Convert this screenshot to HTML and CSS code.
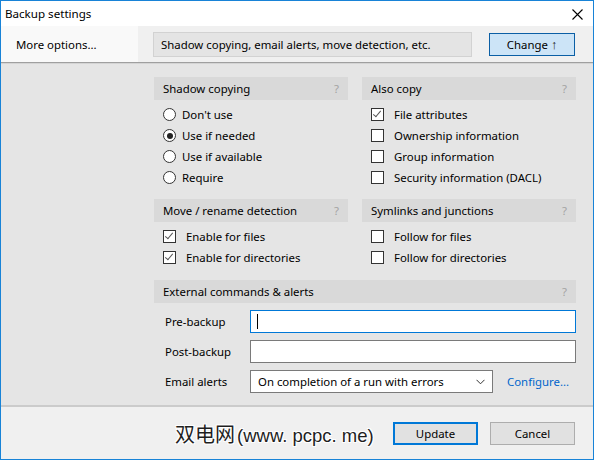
FILE: index.html
```html
<!DOCTYPE html>
<html>
<head>
  <meta charset="utf-8">
  <title>Backup settings</title>
  <link rel="stylesheet" href="styles.css">
</head>
<body>
  <div class="window">
    <div class="titlebar">
      <span class="title">Backup settings</span>
      <svg class="close" width="11" height="11" viewBox="0 0 11 11">
        <path d="M0.5 0.5 L10.5 10.5 M10.5 0.5 L0.5 10.5" stroke="#000" stroke-width="1.1" fill="none"/>
      </svg>
    </div>

    <div class="topbar">
      <div class="more">More options...</div>
      <div class="summary-wrap">
        <div class="summary">Shadow copying, email alerts, move detection, etc.</div>
        <button type="button" class="btn btn-change">Change <span class="arrow">&#8593;</span></button>
      </div>
    </div>

    <div class="main">
      <div class="grid">
        <section class="group">
          <div class="group-head"><span>Shadow copying</span><span class="help">?</span></div>
          <ul class="opts">
            <li><span class="radio"></span>Don't use</li>
            <li><span class="radio on"></span>Use if needed</li>
            <li><span class="radio"></span>Use if available</li>
            <li><span class="radio"></span>Require</li>
          </ul>
        </section>

        <section class="group">
          <div class="group-head"><span>Also copy</span><span class="help">?</span></div>
          <ul class="opts">
            <li><span class="check on"></span>File attributes</li>
            <li><span class="check"></span>Ownership information</li>
            <li><span class="check"></span>Group information</li>
            <li><span class="check"></span>Security information (DACL)</li>
          </ul>
        </section>

        <section class="group">
          <div class="group-head"><span>Move / rename detection</span><span class="help">?</span></div>
          <ul class="opts">
            <li><span class="check on"></span>Enable for files</li>
            <li><span class="check on"></span>Enable for directories</li>
          </ul>
        </section>

        <section class="group">
          <div class="group-head"><span>Symlinks and junctions</span><span class="help">?</span></div>
          <ul class="opts">
            <li><span class="check"></span>Follow for files</li>
            <li><span class="check"></span>Follow for directories</li>
          </ul>
        </section>

        <section class="group ext">
          <div class="group-head"><span>External commands &amp; alerts</span><span class="help">?</span></div>
          <div class="fields">
            <label class="field-label">Pre-backup</label>
            <div class="field focused"><span class="caret"></span></div>

            <label class="field-label">Post-backup</label>
            <div class="field"></div>

            <label class="field-label">Email alerts</label>
            <div class="select-row">
              <div class="select">
                <span>On completion of a run with errors</span>
                <svg width="9" height="6" viewBox="0 0 9 6">
                  <path d="M0.5 0.8 L4.5 4.8 L8.5 0.8" stroke="#333" stroke-width="1" fill="none"/>
                </svg>
              </div>
              <a class="link">Configure...</a>
            </div>
          </div>
        </section>
      </div>
    </div>

    <div class="bottom">
      <span class="watermark">双电网<span class="wm-latin">(www. pcpc. me)</span></span>
      <button type="button" class="btn btn-default">Update</button>
      <button type="button" class="btn">Cancel</button>
    </div>
  </div>
</body>
</html>
```

FILE: styles.css
```css
html, body {
  margin: 0;
  padding: 0;
  background: #fff;
}
body {
  font-family: 'Noto Sans', 'Open Sans', sans-serif;
  font-size: 11.4px;
  color: #000;
}
.window {
  width: 594px;
  height: 460px;
  box-sizing: border-box;
  border: 1px solid #1883d7;
  display: flex;
  flex-direction: column;
  background: #f0f0f0;
}
/* Title bar */
.titlebar {
  height: 25px;
  background: #fff;
  display: flex;
  align-items: center;
  justify-content: space-between;
  padding: 0 10px 0 4px;
  flex-shrink: 0;
}
.title {
  font-size: 11.6px;
}
.close {
  display: block;
  margin-top: 1px;
}
/* Top summary strip */
.topbar {
  height: 36px;
  display: flex;
  flex-shrink: 0;
}
.more {
  width: 137px;
  box-sizing: border-box;
  padding-left: 15px;
  background: #f9f9f9;
  display: flex;
  align-items: center;
}
.summary-wrap {
  flex: 1;
  display: flex;
  align-items: center;
  padding: 0 18px 0 15px;
  background: #f0f0f0;
}
.summary {
  width: 319px;
  height: 25px;
  box-sizing: border-box;
  border: 1px solid #d2d2d2;
  background: #e4e4e4;
  padding-left: 7px;
  display: flex;
  align-items: center;
  margin-top: 1px;
}
.btn {
  font-family: inherit;
  font-size: 11.4px;
  color: #000;
  width: 85px;
  height: 23px;
  box-sizing: border-box;
  border: 1px solid #adadad;
  background: #e1e1e1;
  padding: 0;
}
.btn-change {
  margin-left: auto;
  width: 86px;
  background: #cce4f7;
  border-color: #0b5fa5;
}
.arrow {
  font-size: 12.5px;
  color: #222;
}
.btn-default {
  border: 2px solid #0078d7;
  margin-right: 12px;
}
/* Main area */
.main {
  flex: 1;
  background: #e5e5e5;
  border-top: 1px solid #9f9f9f;
  box-shadow: inset 0 1px 0 #d4d4d4;
  padding: 14px 0 0 153px;
}
.grid {
  display: grid;
  grid-template-columns: 194px 214px;
  column-gap: 14px;
  row-gap: 11px;
}
.group-head {
  height: 23px;
  background: #d9d9d9;
  display: flex;
  align-items: center;
  justify-content: space-between;
  padding: 0 9px;
}
.help {
  color: #a3a3a3;
}
.opts {
  list-style: none;
  margin: 0;
  padding: 4px 0 0 9px;
}
.opts li {
  height: 21px;
  display: flex;
  align-items: center;
}
.radio {
  width: 13px;
  height: 13px;
  box-sizing: border-box;
  border: 1px solid #333;
  border-radius: 50%;
  background: #fff;
  margin-right: 6px;
  position: relative;
}
.radio.on::after {
  content: '';
  position: absolute;
  left: 2.5px;
  top: 2.5px;
  width: 6px;
  height: 6px;
  border-radius: 50%;
  background: #222;
}
.check {
  width: 13px;
  height: 13px;
  box-sizing: border-box;
  border: 1px solid #333;
  background: #fff;
  margin-right: 10px;
  position: relative;
}
.check.on::after {
  content: '';
  position: absolute;
  left: 3px;
  top: 0px;
  width: 3px;
  height: 7px;
  border: solid #555;
  border-width: 0 1px 1px 0;
  transform: rotate(40deg);
}
/* External commands */
.ext {
  grid-column: 1 / -1;
  margin-top: 1px;
}
.fields {
  display: grid;
  grid-template-columns: 96px 326px;
  row-gap: 7px;
  padding-top: 7px;
  align-items: center;
}
.field-label {
  padding-left: 11px;
}
.field {
  height: 23px;
  box-sizing: border-box;
  border: 1px solid #7a7a7a;
  background: #fff;
  display: flex;
  align-items: center;
  padding-left: 6px;
}
.field.focused {
  border-color: #0078d7;
}
.caret {
  width: 1px;
  height: 15px;
  background: #000;
}
.select-row {
  display: flex;
  align-items: center;
}
.select {
  width: 243px;
  height: 23px;
  box-sizing: border-box;
  border: 1px solid #7a7a7a;
  background: #fff;
  display: flex;
  align-items: center;
  justify-content: space-between;
  padding: 0 7px 0 7px;
}
.link {
  color: #0066cc;
  margin-left: 14px;
}
/* Bottom buttons */
.bottom {
  height: 51px;
  flex-shrink: 0;
  border-top: 2px solid #cbcbcb;
  background: #f0f0f0;
  display: flex;
  align-items: center;
  padding: 1px 18px 0 174px;
}
.watermark {
  margin-right: auto;
  font-family: 'Noto Sans CJK SC', sans-serif;
  font-size: 20px;
  color: #1e1e1e;
  text-shadow: 1px 1px 0 #fff, -1px -1px 0 #fff, 1px -1px 0 #fff, -1px 1px 0 #fff;
}
.wm-latin {
  font-family: 'Liberation Sans', sans-serif;
  font-size: 18.5px;
  margin-left: 2px;
}
```
